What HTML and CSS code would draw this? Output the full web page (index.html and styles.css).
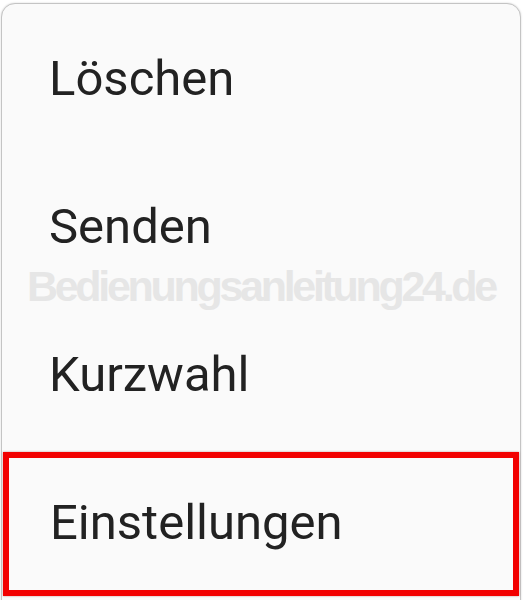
FILE: index.html
```html
<!DOCTYPE html>
<html lang="de">
<head>
<meta charset="utf-8">
<link rel="stylesheet" href="styles.css">
</head>
<body>
<div class="stage">
  <div class="card">
    <div class="item">Löschen</div>
    <div class="item">Senden</div>
    <div class="item">Kurzwahl</div>
    <div class="item highlight">Einstellungen</div>
  </div>
  <div class="watermark">Bedienungsanleitung24.de</div>
</div>
</body>
</html>
```
FILE: styles.css
```css
html, body {
  margin: 0;
  padding: 0;
  background: #ffffff;
  overflow: hidden;
}
.stage {
  position: relative;
  width: 531px;
  height: 600px;
  overflow: hidden;
}
.card {
  margin: 3px 0 0 1px;
  width: 518px;
  height: 700px;
  background: #fafafa;
  border: 1px solid #c4c4c4;
  border-radius: 14px;
  box-shadow: 0 0 2px rgba(0,0,0,0.18);
  display: flex;
  flex-direction: column;
  font-family: Roboto, "Noto Sans", sans-serif;
  color: #222222;
}
.item {
  height: 148px;
  flex: none;
  display: flex;
  align-items: center;
  padding-left: 47px;
  font-size: 49px;
  box-sizing: border-box;
}
.highlight {
  border: 6px solid #f20000;
  margin: 4px 1px 0 1px;
  padding-left: 41px;
  padding-bottom: 4px;
  height: 144px;
  box-shadow: 0 0 2px rgba(120,0,0,0.4);
}
.watermark {
  position: absolute;
  left: 27px;
  top: 262px;
  font-family: "Liberation Sans", Arial, sans-serif;
  font-weight: bold;
  font-size: 43px;
  letter-spacing: -3.3px;
  color: #e6e6e6;
  white-space: nowrap;
}
```
